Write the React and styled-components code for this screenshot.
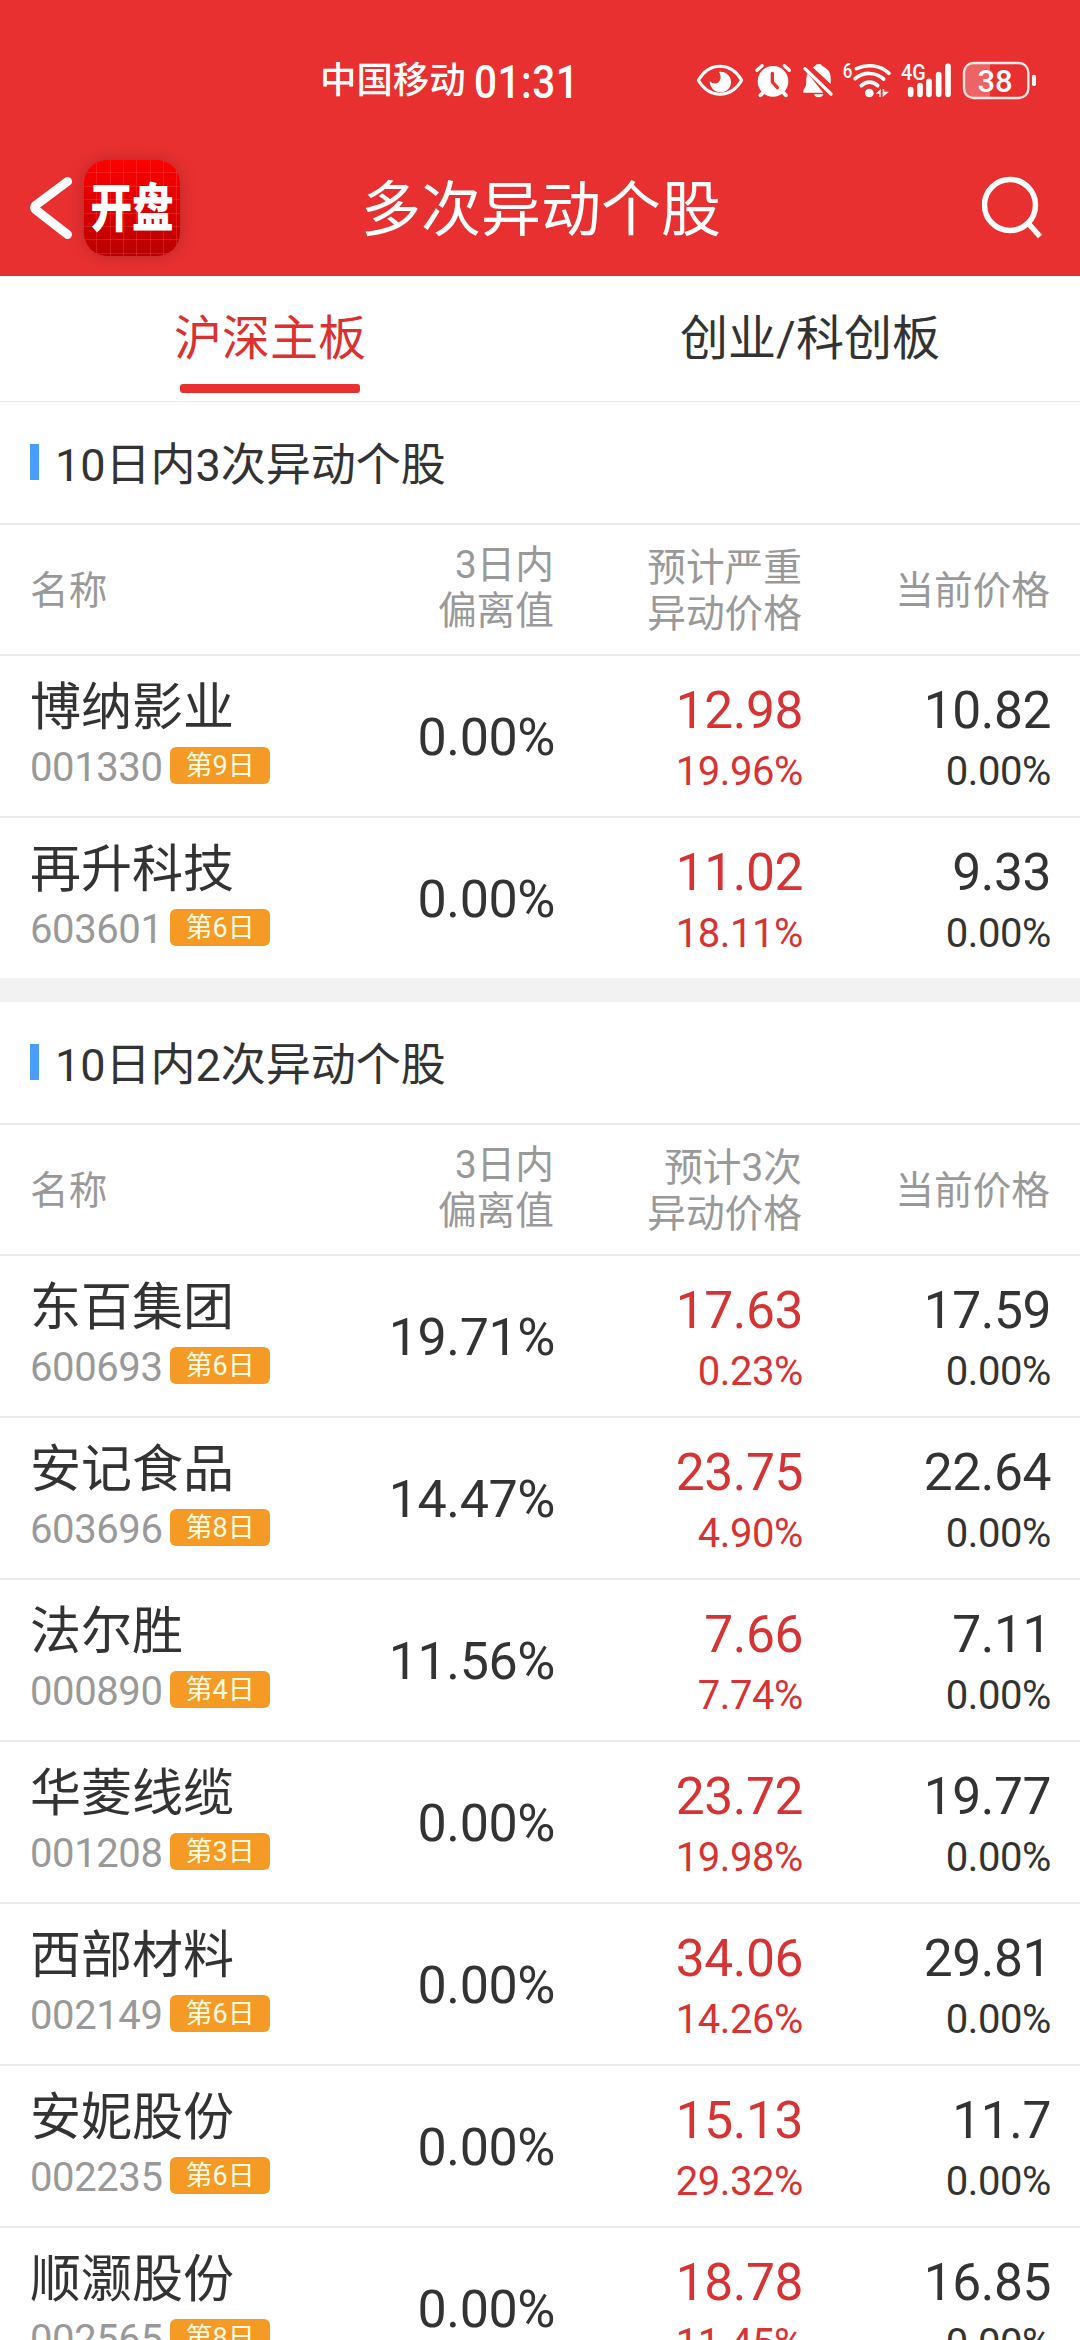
import React, { useState } from "react";
import styled, { createGlobalStyle } from "styled-components";

const GlobalStyle = createGlobalStyle`
  * {
    box-sizing: border-box;
  }
  body {
    margin: 0;
    background: #fff;
    overflow: hidden;
  }
`;

const Page = styled.div`
  height: 2340px;
  overflow: hidden;
  background: #fff;
  color: #333;
  font-family: Roboto, "Noto Sans CJK SC", sans-serif;
`;

const Header = styled.header`
  height: 276px;
  background: #e93030;
  color: #fff;
`;

const StatusBar = styled.div`
  height: 140px;
  padding: 60px 40px 0 320px;
  display: flex;
  align-items: flex-start;
`;

const Carrier = styled.span`
  font-size: 36.4px;
  font-weight: 500;
  line-height: 42px;
  margin-right: 8px;
  white-space: nowrap;
`;

const Clock = styled.span`
  font-size: 46px;
  line-height: 44px;
  font-weight: 500;
  letter-spacing: 0.6px;
  white-space: nowrap;
  transform: scaleX(0.88);
  transform-origin: left;
`;

const StatusIcons = styled.div`
  display: flex;
  height: 40px;
  margin-left: auto;

  svg {
    display: block;
    height: 40px;
  }
`;

const NavBar = styled.div`
  height: 136px;
  padding: 0 30px 0 26px;
  display: grid;
  grid-template-columns: 206px 1fr 200px;
  align-items: center;
`;

const NavLeft = styled.div`
  display: flex;
  align-items: center;
  gap: 9px;
`;

const Logo = styled.div`
  width: 96px;
  height: 96px;
  border-radius: 23px;
  display: flex;
  align-items: center;
  justify-content: center;
  background:
    repeating-linear-gradient(90deg, transparent 0 12.3px, rgba(255, 90, 90, 0.3) 12.3px 13.3px),
    repeating-linear-gradient(180deg, transparent 0 12.4px, rgba(255, 90, 90, 0.3) 12.4px 13.4px),
    linear-gradient(#ff0000, #b80000);
  box-shadow: 0 0 16px rgba(90, 30, 30, 0.35);
`;

const LogoText = styled.span`
  padding-top: 3px;
  font-size: 52px;
  font-weight: 900;
  line-height: 93px;
  white-space: nowrap;
  transform: scaleX(0.8);
`;

const Title = styled.h1`
  margin: 0;
  padding-top: 6px;
  font-size: 60px;
  font-weight: 400;
  line-height: 130px;
  text-align: center;
`;

const SearchButton = styled.div`
  justify-self: end;
  display: flex;
`;

const Tabs = styled.nav`
  height: 126px;
  display: grid;
  grid-template-columns: 1fr 1fr;
  border-bottom: 1px solid #ebebeb;
`;

const Tab = styled.div`
  display: flex;
  flex-direction: column;
  align-items: center;
  font-size: 48px;
  line-height: 108px;
  color: ${(p) => (p.$active ? "#dc3131" : "#333")};
  padding-top: 9px;

  &::after {
    content: "";
    flex: none;
    width: 180px;
    height: 9px;
    margin-top: -9px;
    border-radius: 3px;
    background: ${(p) => (p.$active ? "#e93030" : "transparent")};
  }
`;

const Section = styled.section`
  & + & {
    border-top: 24px solid #f2f2f2;
  }
`;

const SectionTitle = styled.h2`
  margin: 0;
  height: 123px;
  padding: 0 30px 3px;
  display: flex;
  align-items: center;
  gap: 16px;
  font-size: 45px;
  font-weight: 400;
  border-bottom: 2px solid #ebebeb;

  &::before {
    content: "";
    width: 9px;
    height: 36px;
    margin-top: 2px;
    background: #4a9dfc;
  }
`;

const Columns = styled.div`
  display: grid;
  grid-template-columns: 224px 300px 248px 248px;
  align-items: center;
  padding: 0 30px;
`;

const TableHead = styled(Columns)`
  height: 131px;
  padding-top: 3px;
  border-bottom: 2px solid #ebebeb;
  color: #999;
  font-size: 38.7px;
  line-height: 46px;
`;

const HeadCell = styled.div`
  text-align: ${(p) => p.$align || "right"};
  white-space: pre-line;
  padding-bottom: ${(p) => p.$lift || 0}px;
`;

const Row = styled(Columns)`
  height: 162px;
  border-bottom: 2px solid #ebebeb;

  &:last-child {
    height: 160px;
    border-bottom: none;
  }
`;

const NameCell = styled.div`
  white-space: nowrap;
`;

const StockName = styled.div`
  font-size: 51px;
  line-height: 60px;
`;

const CodeLine = styled.div`
  display: flex;
  align-items: center;
  gap: 8px;
`;

const Code = styled.span`
  width: 133px;
  padding-top: 3px;
  color: #999;
  font-size: 40px;
  line-height: 53px;
  letter-spacing: -0.4px;
`;

const DayBadge = styled.span`
  height: 37px;
  margin-bottom: 2px;
  padding: 0 15px;
  border-radius: 6px;
  background: #f59b25;
  color: #fffbe0;
  font-size: 27px;
  line-height: 38px;
`;

const Deviation = styled.div`
  text-align: right;
  font-size: 52px;
  letter-spacing: -0.4px;
  padding-top: 3px;
  margin-right: -1px;
`;

const PriceCell = styled.div`
  text-align: right;
  letter-spacing: -0.4px;
  padding-top: 9px;
  margin-right: -1px;
  color: ${(p) => (p.$red ? "#d63434" : "#333")};
`;

const Price = styled.div`
  font-size: 51.5px;
  line-height: 62px;
`;

const Percent = styled.div`
  font-size: 40px;
  line-height: 60px;
`;

const sections = [
  {
    title: "10日内3次异动个股",
    priceLabel: "预计严重\n异动价格",
    stocks: [
      { name: "博纳影业", code: "001330", day: 9, deviation: "0.00%", target: "12.98", gap: "19.96%", price: "10.82" },
      { name: "再升科技", code: "603601", day: 6, deviation: "0.00%", target: "11.02", gap: "18.11%", price: "9.33" },
    ],
  },
  {
    title: "10日内2次异动个股",
    priceLabel: "预计3次\n异动价格",
    stocks: [
      { name: "东百集团", code: "600693", day: 6, deviation: "19.71%", target: "17.63", gap: "0.23%", price: "17.59" },
      { name: "安记食品", code: "603696", day: 8, deviation: "14.47%", target: "23.75", gap: "4.90%", price: "22.64" },
      { name: "法尔胜", code: "000890", day: 4, deviation: "11.56%", target: "7.66", gap: "7.74%", price: "7.11" },
      { name: "华菱线缆", code: "001208", day: 3, deviation: "0.00%", target: "23.72", gap: "19.98%", price: "19.77" },
      { name: "西部材料", code: "002149", day: 6, deviation: "0.00%", target: "34.06", gap: "14.26%", price: "29.81" },
      { name: "安妮股份", code: "002235", day: 6, deviation: "0.00%", target: "15.13", gap: "29.32%", price: "11.7" },
      { name: "顺灏股份", code: "002565", day: 8, deviation: "0.00%", target: "18.78", gap: "11.45%", price: "16.85" },
    ],
  },
];

const EyeIcon = () => (
  <svg width="52" viewBox="48 60 156 120" fill="none">
    <path d="M55 121C72 92 95 79 120 79s48 13 65 42c-17 29-40 42-65 42s-48-13-65-42Z" stroke="#fff" strokeWidth="9" strokeLinejoin="round" />
    <path d="M117 96c19-3 36 11 36 30 0 18-14 31-31 31-19 0-33-15-33-34 8 9 20 10 27 3 7-8 8-19 1-30Z" fill="#fff" />
  </svg>
);

const AlarmIcon = () => (
  <svg width="49" viewBox="204 60 147 120" fill="none" strokeLinecap="round" strokeLinejoin="round">
    <circle cx="279" cy="124" r="46" fill="#fff" />
    <path d="M231 91l15-14M328 91l-15-14" stroke="#fff" strokeWidth="10" />
    <path d="M241 166l12-12M318 166l-12-12" stroke="#fff" strokeWidth="11" />
    <path d="M277 100v26l15 17" stroke="#e93030" strokeWidth="10" />
  </svg>
);

const BellOffIcon = () => (
  <svg width="42" viewBox="351 60 126 120" fill="none" strokeLinecap="round">
    <path d="M398 82c5-2 9-4 11-9h14c1 4 5 6 10 9 14 8 19 18 19 33v17Z" fill="#fff" />
    <path d="M383 100c-3 6-4 12-4 20 0 14-1 20-9 31v7h60Z" fill="#fff" />
    <path d="M375 86l78 76" stroke="#fff" strokeWidth="10" />
    <path d="M402 163h28c-2 6-7 9-14 9s-12-3-14-9Z" fill="#fff" />
  </svg>
);

const WifiIcon = () => (
  <svg width="58" viewBox="477 60 174 120" fill="none" stroke="#fff" strokeWidth="11" strokeLinecap="round">
    <text x="488" y="114" fontSize="60" fontWeight="500" fill="#fff" stroke="none" textLength="29" lengthAdjust="spacingAndGlyphs">6</text>
    <path d="M529 86c32-15 72-11 98 14M525 116c25-21 61-21 86 1M544 137c14-14 35-14 49 0" />
    <circle cx="568" cy="159" r="13" fill="#fff" stroke="none" />
    <path d="M587 161l15-14v24h-4v-10ZM608 171v-24h5v8h14Z" fill="#fff" stroke="none" />
  </svg>
);

const SignalIcon = () => (
  <svg width="61" viewBox="651 60 183 120" stroke="#fff" strokeWidth="17" strokeLinecap="round">
    <text x="663" y="121" fontSize="64" fontWeight="500" fill="#fff" stroke="none" textLength="74" lengthAdjust="spacingAndGlyphs">4G</text>
    <path d="M692 149v14M720 137v26M747 124v39M776 104v59M804 79v84" />
  </svg>
);

const BatteryIcon = () => (
  <svg width="82" viewBox="834 60 246 120" fill="none">
    <path d="M930 70v104h-50q-27 0-27-27V97q0-27 27-27Z" fill="#fff" fillOpacity="0.25" />
    <rect x="852" y="69" width="193" height="105" rx="28" stroke="#ffe9e9" strokeWidth="7" />
    <rect x="1056" y="104" width="12" height="34" rx="5" fill="#fff" />
    <text x="945" y="155" fontSize="93" fontWeight="500" fill="#fff" textAnchor="middle">38</text>
  </svg>
);

const BackIcon = () => (
  <svg width="49" height="64" viewBox="0 0 49 64" fill="none">
    <path d="M41.5 5.5L10 29q-3 2.500 0 5L41.5 58.500" stroke="#fff" strokeWidth="9" strokeLinecap="round" strokeLinejoin="round" />
  </svg>
);

const SearchIcon = () => (
  <svg width="68" height="64" viewBox="0 0 68 64" fill="none" stroke="#fff" strokeWidth="5.500">
    <circle cx="28" cy="29" r="25.500" />
    <path d="M45 46l13 14.500" />
  </svg>
);

const StockRow = ({ stock }) => (
  <Row>
    <NameCell>
      <StockName>{stock.name}</StockName>
      <CodeLine>
        <Code>{stock.code}</Code>
        <DayBadge>第{stock.day}日</DayBadge>
      </CodeLine>
    </NameCell>
    <Deviation>{stock.deviation}</Deviation>
    <PriceCell $red>
      <Price>{stock.target}</Price>
      <Percent>{stock.gap}</Percent>
    </PriceCell>
    <PriceCell>
      <Price>{stock.price}</Price>
      <Percent>0.00%</Percent>
    </PriceCell>
  </Row>
);

const App = () => {
  const [activeTab, setActiveTab] = useState(0);

  return (
    <Page>
      <GlobalStyle />
      <Header>
        <StatusBar>
          <Carrier>中国移动</Carrier>
          <Clock>01:31</Clock>
          <StatusIcons>
            <EyeIcon />
            <AlarmIcon />
            <BellOffIcon />
            <WifiIcon />
            <SignalIcon />
            <BatteryIcon />
          </StatusIcons>
        </StatusBar>
        <NavBar>
          <NavLeft>
            <BackIcon />
            <Logo>
              <LogoText>开盘</LogoText>
            </Logo>
          </NavLeft>
          <Title>多次异动个股</Title>
          <SearchButton>
            <SearchIcon />
          </SearchButton>
        </NavBar>
      </Header>

      <Tabs>
        {["沪深主板", "创业/科创板"].map((label, i) => (
          <Tab key={label} $active={i === activeTab} onClick={() => setActiveTab(i)}>
            {label}
          </Tab>
        ))}
      </Tabs>

      {sections.map((section) => (
        <Section key={section.title}>
          <SectionTitle>{section.title}</SectionTitle>
          <TableHead>
            <HeadCell $align="left">名称</HeadCell>
            <HeadCell $lift={6}>{"3日内\n偏离值"}</HeadCell>
            <HeadCell>{section.priceLabel}</HeadCell>
            <HeadCell>当前价格</HeadCell>
          </TableHead>
          {section.stocks.map((stock) => (
            <StockRow key={stock.code} stock={stock} />
          ))}
        </Section>
      ))}
    </Page>
  );
};

export default App;
